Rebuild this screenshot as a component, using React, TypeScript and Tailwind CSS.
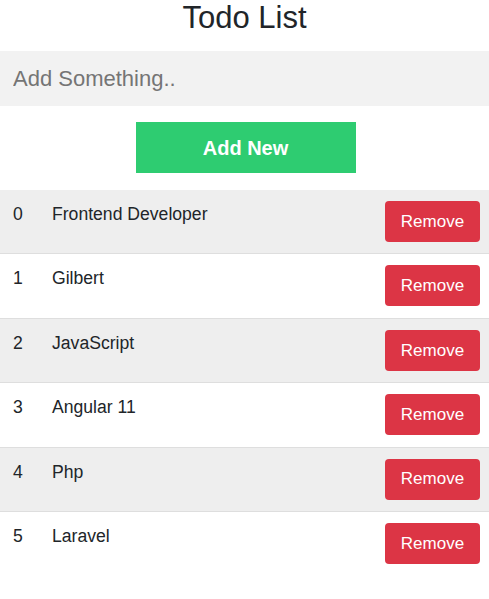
import React from "react";

const items = ["Frontend Developer", "Gilbert", "JavaScript", "Angular 11", "Php", "Laravel"];

export default function App() {
  return (
    <div className="min-h-[599px] w-full bg-white text-[#212529]" style={{ fontFamily: '"Liberation Sans", Arial, sans-serif' }}>
      <h1 className="m-0 text-center text-[31px] font-normal leading-[36px]">Todo List</h1>
      <div className="mt-[15px]">
        <input
          type="text"
          placeholder="Add Something.."
          className="block h-[55px] w-full border-0 bg-[#f2f2f2] pl-[13px] text-[22px] text-[#212529] outline-none placeholder:text-[#757575]"
        />
      </div>
      <div className="mt-[16px] flex justify-center pl-[2px]">
        <button className="flex h-[51px] w-[220px] items-center justify-center bg-[#2ecc71] text-[20px] font-bold text-white">
          Add New
        </button>
      </div>
      <ul className="mt-[17px]">
        {items.map((item, i) => (
          <li
            key={i}
            className={`flex h-[64.4px] items-start pl-[13px] pr-[9px] pt-[11px] ${i % 2 === 0 ? "bg-[#eeeeee]" : "bg-white"} ${i < items.length - 1 ? "border-b border-[#dedede]" : ""}`}
          >
            <span className="w-[39px] text-[17.6px] leading-[26px]">{i}</span>
            <span className="flex-1 text-[17.6px] leading-[26px]">{item}</span>
            <button className="flex h-[41px] w-[95px] items-center justify-center rounded-[4px] bg-[#dc3545] text-[17px] text-white">
              Remove
            </button>
          </li>
        ))}
      </ul>
    </div>
  );
}
